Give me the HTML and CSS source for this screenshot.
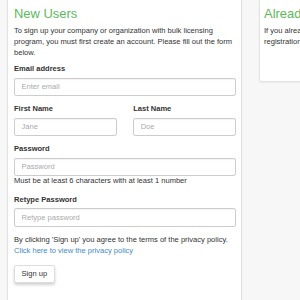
FILE: index.html
```html
<html>
    <head>
        <link rel="stylesheet" href="styles.css">
    </head>
    <body>
        <div class="page">
            <div class="panel signup">
                <h3 class="title">New Users</h3>
                <p class="intro">To sign up your company or organization with bulk licensing program, you must first create an account. Please fill out the form below.</p>
                <form class="form" action="#" method="POST">
                    <div class="group">
                        <label for="email">Email address</label>
                        <input type="email" id="email" placeholder="Enter email">
                    </div>
                    <div class="names">
                        <div class="group">
                            <label for="first">First Name</label>
                            <input type="text" id="first" placeholder="Jane">
                        </div>
                        <div class="group">
                            <label for="last">Last Name</label>
                            <input type="text" id="last" placeholder="Doe">
                        </div>
                    </div>
                    <div class="group">
                        <label for="password">Password</label>
                        <input type="password" id="password" placeholder="Password">
                        <span class="hint">Must be at least 6 characters with at least 1 number</span>
                    </div>
                    <div class="group">
                        <label for="retype">Retype Password</label>
                        <input type="password" id="retype" placeholder="Retype password">
                    </div>
                    <p class="terms">
                        By clicking 'Sign up' you agree to the terms of the privacy policy.<br>
                        <a href="#">Click here to view the privacy policy</a>
                    </p>
                    <button type="submit" class="btn">Sign up</button>
                </form>
            </div>
            <div class="panel login">
                <h3 class="title">Already Registered?</h3>
                <p class="intro">If you already have an account with us, you do not need<br>registration again. Just log in below.</p>
            </div>
        </div>
    </body>
</html>
```
FILE: styles.css
```css
* {
    box-sizing: border-box;
}

html, body {
    height: 100%;
    overflow: hidden;
}

body {
    margin: 0;
    background: #f7f7f7;
    font-family: "Liberation Sans", Arial, sans-serif;
    font-size: 7.56px;
    line-height: 10.8px;
    color: #333;
}

.page {
    display: flex;
    align-items: flex-start;
    gap: 17px;
    padding-left: 7px;
    margin-top: -4px;
}

.panel {
    flex: none;
    width: 235px;
    background: #fff;
    border: 1px solid #e2e2e2;
    border-radius: 3px;
    box-shadow: 0 1px 2px rgba(0, 0, 0, 0.06);
    padding: 0 5px 12px 6px;
}

.login {
    width: 260px;
    height: 86px;
    padding-left: 4px;
}

.title {
    margin: 9.7px 0 5.4px;
    font-size: 12.96px;
    line-height: 14.26px;
    font-weight: normal;
    color: #5cb85c;
}

.intro {
    margin: 0 0 5.4px;
}

.group {
    margin-bottom: 8.1px;
}

.group label {
    display: block;
    font-weight: bold;
    margin-bottom: 2.7px;
}

.group input {
    display: block;
    width: 100%;
    height: 18.4px;
    padding: 0 6.5px;
    border: 1px solid #ccc;
    border-radius: 2.2px;
    box-shadow: inset 0 1px 1px rgba(0, 0, 0, 0.05);
    font-family: inherit;
    font-size: 7.56px;
    color: #555;
}

.group input::placeholder {
    color: #aaa;
}

.hint {
    display: block;
}

.names {
    display: grid;
    grid-template-columns: 1fr 1fr;
    gap: 16.3px;
}

.terms {
    margin: 0 0 8.4px;
}

.terms a {
    color: #428bca;
    text-decoration: none;
}

.btn {
    display: block;
    height: 18.4px;
    padding: 0 6.5px;
    background: #fff;
    border: 1px solid #ddd;
    border-radius: 2.2px;
    box-shadow: 0 2px 3px rgba(0, 0, 0, 0.18);
    font-family: inherit;
    font-size: 7.56px;
    color: #333;
}
```
